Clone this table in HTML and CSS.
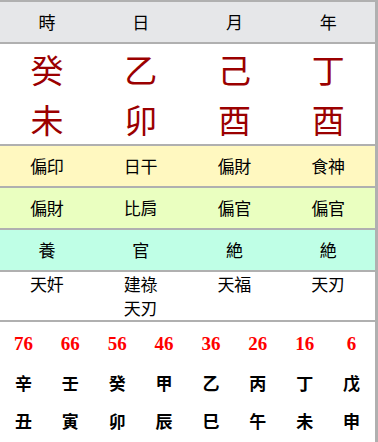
FILE: index.html
```html
<!DOCTYPE html>
<html lang="zh-Hant">
<head>
<meta charset="utf-8">
<link rel="stylesheet" href="styles.css">
</head>
<body>
<div class="chart">
  <div class="row head">
    <div class="cell">時</div><div class="cell">日</div><div class="cell">月</div><div class="cell">年</div>
  </div>
  <div class="row pillars">
    <div class="cell">癸<br>未</div><div class="cell">乙<br>卯</div><div class="cell">己<br>酉</div><div class="cell">丁<br>酉</div>
  </div>
  <div class="row band yellow">
    <div class="cell">偏印</div><div class="cell">日干</div><div class="cell">偏財</div><div class="cell">食神</div>
  </div>
  <div class="row band green">
    <div class="cell">偏財</div><div class="cell">比肩</div><div class="cell">偏官</div><div class="cell">偏官</div>
  </div>
  <div class="row band cyan">
    <div class="cell">養</div><div class="cell">官</div><div class="cell">絶</div><div class="cell">絶</div>
  </div>
  <div class="row stars">
    <div class="cell">天奸</div><div class="cell">建祿<br>天刃</div><div class="cell">天福</div><div class="cell">天刃</div>
  </div>
  <div class="luck">
    <div class="age">76</div><div class="age">66</div><div class="age">56</div><div class="age">46</div><div class="age">36</div><div class="age">26</div><div class="age">16</div><div class="age">6</div>
    <div class="gz">辛</div><div class="gz">壬</div><div class="gz">癸</div><div class="gz">甲</div><div class="gz">乙</div><div class="gz">丙</div><div class="gz">丁</div><div class="gz">戊</div>
    <div class="gz">丑</div><div class="gz">寅</div><div class="gz">卯</div><div class="gz">辰</div><div class="gz">巳</div><div class="gz">午</div><div class="gz">未</div><div class="gz">申</div>
  </div>
</div>
</body>
</html>
```

FILE: styles.css
```css
html, body {
  margin: 0;
  padding: 0;
  background: #ffffff;
}
body {
  font-family: "Noto Sans CJK TC", "Noto Sans CJK JP", sans-serif;
  color: #000;
}
.chart {
  width: 375px;
  height: 440px;
  border-top: 2px solid #b0b0b0;
  border-right: 3px solid #b0b0b0;
  overflow: hidden;
}
.row {
  display: grid;
  grid-template-columns: repeat(4, 1fr);
  border-bottom: 2px solid #b0b0b0;
}
.cell {
  text-align: center;
}
.head {
  height: 40px;
  background: #e6e7e9;
  align-items: center;
  font-size: 17px;
  line-height: 40px;
}
.pillars {
  height: 100px;
  font-size: 33px;
  line-height: 50px;
  color: #9b0000;
}
.band {
  height: 40px;
  align-items: center;
  font-size: 17px;
  line-height: 40px;
}
.yellow { background: #fff8c0; }
.green { background: #eaffc0; }
.cyan { background: #bfffe6; }
.stars {
  height: 48px;
  font-size: 17px;
  line-height: 24px;
}
.luck {
  display: grid;
  grid-template-columns: repeat(8, 1fr);
  grid-auto-rows: 38px;
  padding-top: 3px;
  align-items: center;
  text-align: center;
}
.age {
  font-family: "Liberation Serif", serif;
  font-weight: bold;
  font-size: 19px;
  color: #ff0000;
}
.gz {
  font-weight: bold;
  font-size: 17px;
}
```
